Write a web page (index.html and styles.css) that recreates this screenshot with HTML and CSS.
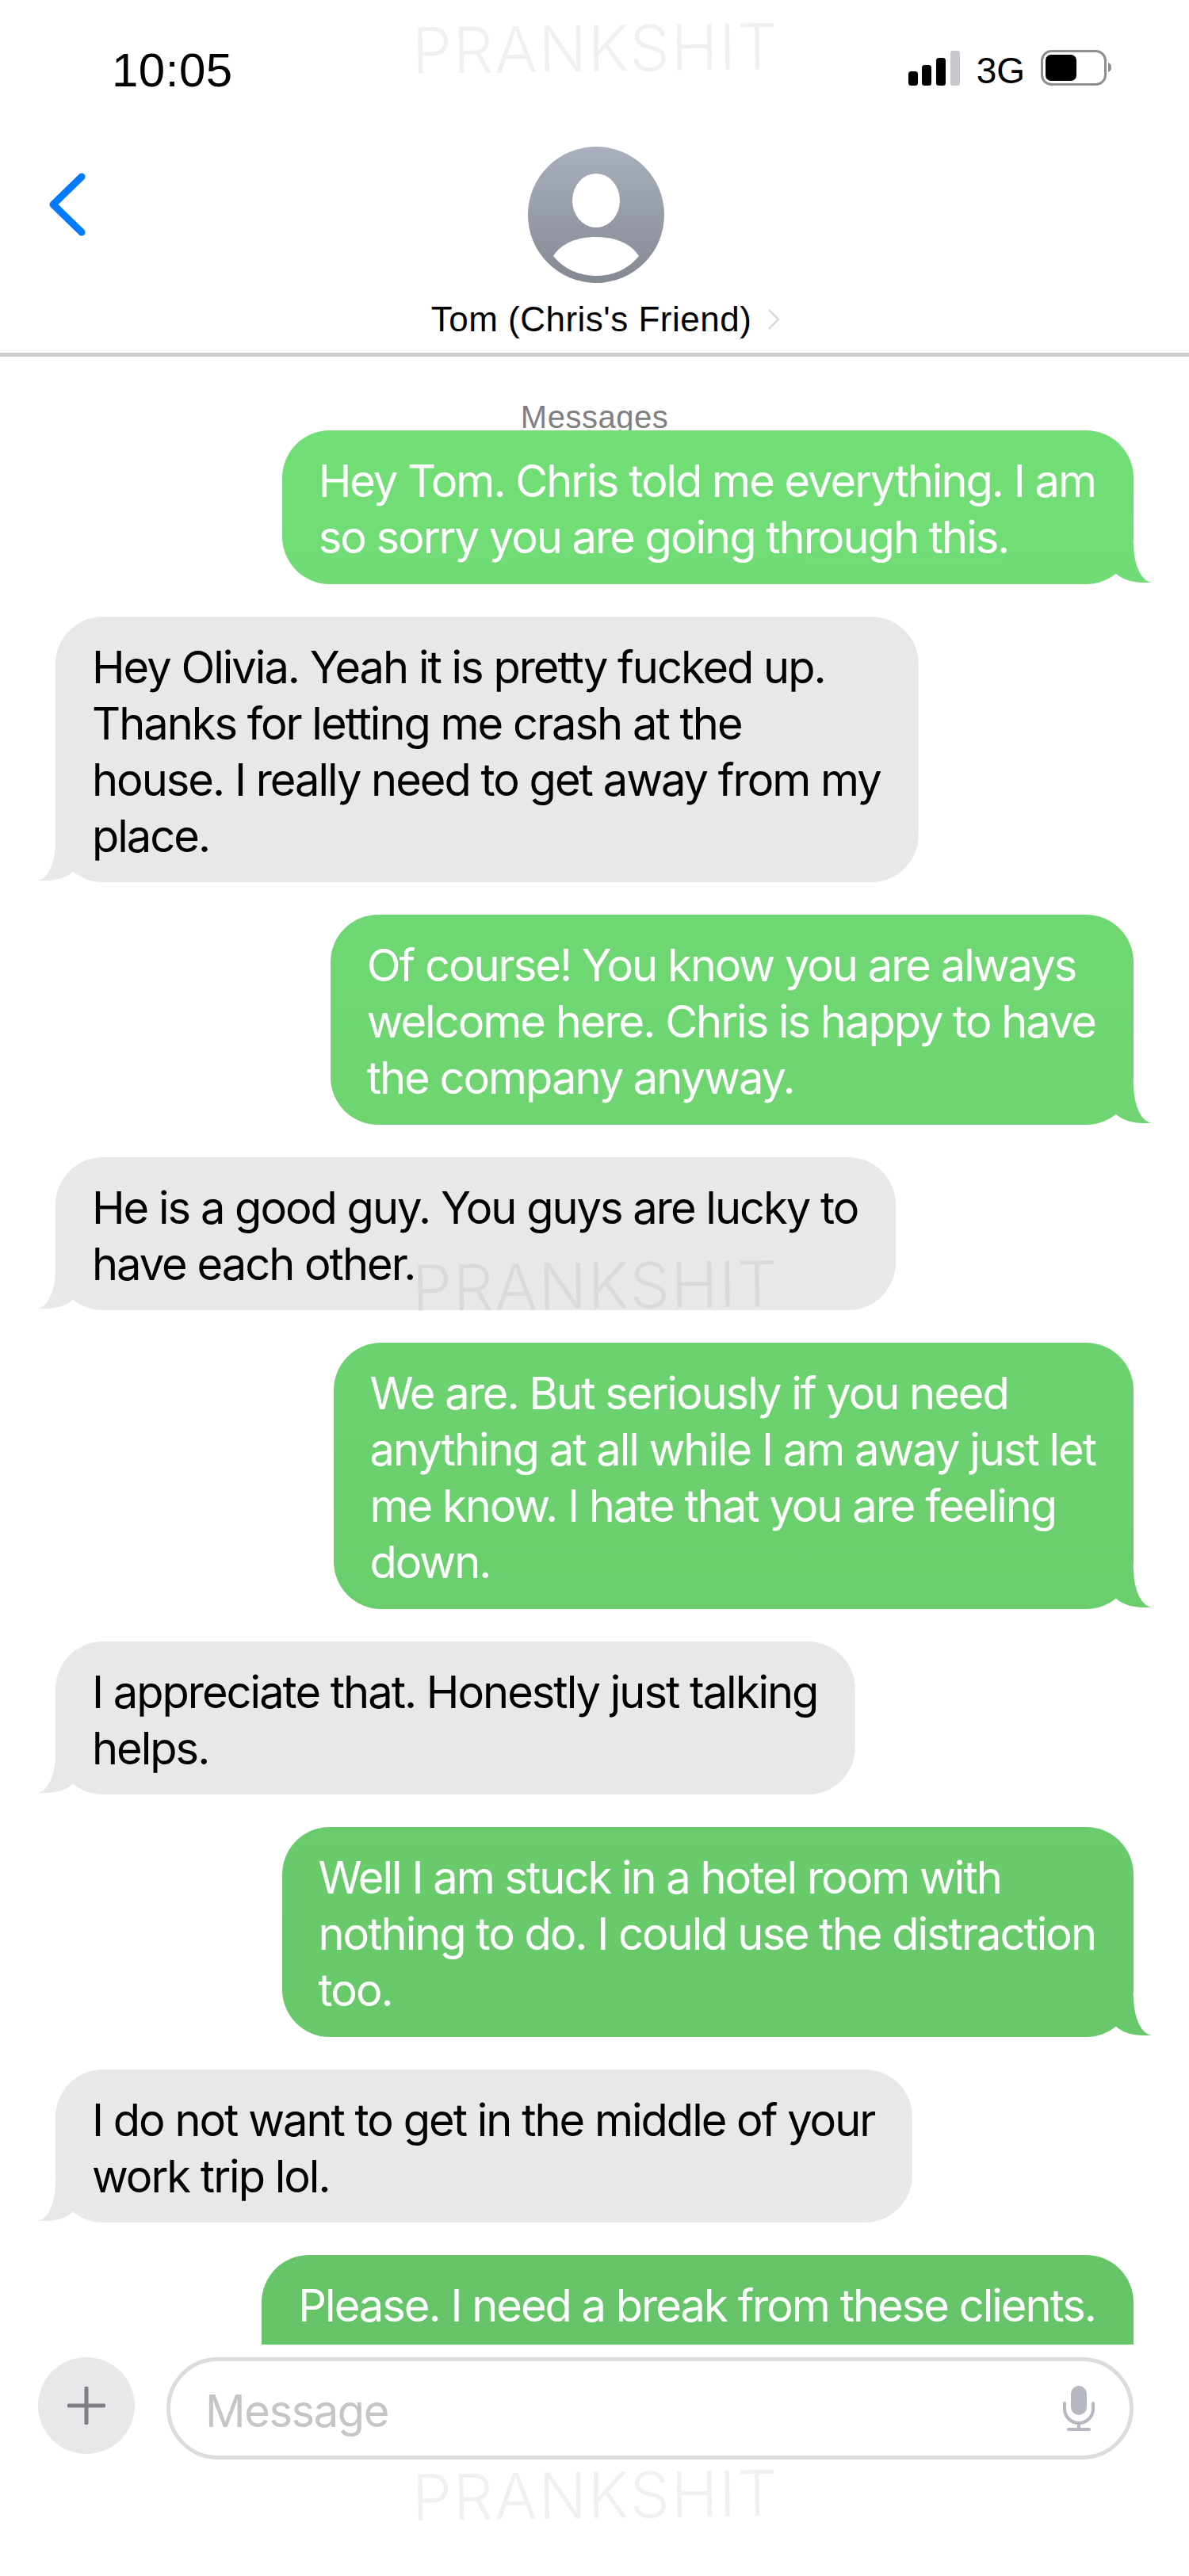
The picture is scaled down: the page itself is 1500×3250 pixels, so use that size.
FILE: index.html
```html
<!DOCTYPE html>
<html lang="en">
<head>
    <meta charset="UTF-8">
    <meta name="viewport" content="width=device-width, initial-scale=1">
    <title>Messages</title>
    <link rel="stylesheet" href="styles.css">
</head>
<body>
<div class="phone">
    <div class="status-bar">
        <div class="time">10:05</div>
        <div class="status-icons">
            <svg class="signal" width="66" height="44" viewBox="0 0 66 44">
                <rect x="0" y="26" width="12" height="18" rx="3.5" fill="#000"/>
                <rect x="17" y="18" width="12" height="26" rx="3.5" fill="#000"/>
                <rect x="35" y="9" width="12" height="35" rx="3.5" fill="#000"/>
                <rect x="53" y="0" width="12" height="44" rx="3" fill="#c7c7cc"/>
            </svg>
            <span class="network">3G</span>
            <svg class="battery" width="90" height="46" viewBox="0 0 90 46">
                <rect x="1.5" y="1.5" width="80" height="42" rx="12" fill="#fff" stroke="#8e8e8e" stroke-width="3"/>
                <rect x="6" y="6" width="39" height="33" rx="7" fill="#000"/>
                <path d="M85 16c3 1 4 3 4 6s-1 5-4 6z" fill="#8e8e8e"/>
            </svg>
        </div>
    </div>

    <div class="header">
        <svg class="back" width="46" height="80" viewBox="0 0 46 80">
            <path d="M41 5L5 40l36 35" fill="none" stroke="#007aff" stroke-width="9" stroke-linecap="round" stroke-linejoin="round"/>
        </svg>
        <div class="contact">
            <svg class="avatar" width="172" height="172" viewBox="0 0 172 172">
                <defs>
                    <linearGradient id="avatar-bg" x1="0" y1="0" x2="0" y2="1">
                        <stop offset="0" stop-color="#a9afbd"/>
                        <stop offset="1" stop-color="#858994"/>
                    </linearGradient>
                </defs>
                <circle cx="86" cy="86" r="86" fill="url(#avatar-bg)"/>
                <ellipse cx="86" cy="68" rx="30" ry="34" fill="#fff"/>
                <path d="M32 138C42 122 62 114 86 114s44 8 54 24c-13 16-32 25-54 25s-41-9-54-25z" fill="#fff"/>
            </svg>
            <div class="contact-name">
                <span>Tom (Chris's Friend)</span>
                <svg class="contact-arrow" width="16" height="28" viewBox="0 0 16 28">
                    <path d="M2 2l12 12L2 26" fill="none" stroke="#d8d8d8" stroke-width="2.5"/>
                </svg>
            </div>
        </div>
    </div>

    <div class="chat">
        <div class="chat-label">Messages</div>

        <div class="bubble me">Hey Tom. Chris told me everything. I am<br>so sorry you are going through this.</div>
        <div class="bubble them">Hey Olivia. Yeah it is pretty fucked up.<br>Thanks for letting me crash at the<br>house. I really need to get away from my<br>place.</div>
        <div class="bubble me">Of course! You know you are always<br>welcome here. Chris is happy to have<br>the company anyway.</div>
        <div class="bubble them">He is a good guy. You guys are lucky to<br>have each other.</div>
        <div class="bubble me">We are. But seriously if you need<br>anything at all while I am away just let<br>me know. I hate that you are feeling<br>down.</div>
        <div class="bubble them">I appreciate that. Honestly just talking<br>helps.</div>
        <div class="bubble me">Well I am stuck in a hotel room with<br>nothing to do. I could use the distraction<br>too.</div>
        <div class="bubble them">I do not want to get in the middle of your<br>work trip lol.</div>
        <div class="bubble me bubble-cut">Please. I need a break from these clients.</div>
    </div>

    <div class="composer">
        <div class="add-button">
            <svg width="48" height="48" viewBox="0 0 48 48">
                <path d="M24 2v44M2 24h44" stroke="#7d7d83" stroke-width="5" stroke-linecap="round"/>
            </svg>
        </div>
        <div class="message-input">
            <span class="placeholder">Message</span>
            <svg class="mic" width="40" height="58" viewBox="0 0 40 58">
                <rect x="10" y="0" width="20" height="37" rx="10" fill="#b5b8c1"/>
                <path d="M2 22v7a18 18 0 0 0 36 0v-7M20 47v8M7 55h26" fill="none" stroke="#b5b8c1" stroke-width="4" stroke-linecap="round"/>
            </svg>
        </div>
    </div>

    <div class="watermark watermark-top">PRANKSHIT</div>
    <div class="watermark watermark-middle">PRANKSHIT</div>
    <div class="watermark watermark-bottom">PRANKSHIT</div>
</div>
</body>
</html>
```

FILE: styles.css
```css
* {
    margin: 0;
    padding: 0;
    box-sizing: border-box;
}

html,
body {
    width: 100%;
    height: 100%;
    background: #ffffff;
}

.phone {
    position: relative;
    display: flex;
    flex-direction: column;
    height: 3250px;
    overflow: hidden;
    font-family: "Liberation Sans", Arial, sans-serif;
}

/* status bar */
.status-bar {
    display: flex;
    justify-content: space-between;
    align-items: flex-start;
    height: 170px;
    padding: 55px 97px 0 141px;
}

.time {
    font-size: 60px;
    line-height: 68px;
    letter-spacing: 0.5px;
}

.status-icons {
    display: flex;
    align-items: flex-start;
    padding-top: 8px;
}

.signal {
    margin-right: 20px;
    margin-top: 1px;
}

.network {
    font-size: 46px;
    line-height: 44px;
    margin-top: 4px;
    margin-right: 20px;
}

/* header */
.header {
    position: relative;
    display: flex;
    justify-content: center;
    height: 280px;
    padding-top: 15px;
    border-bottom: 5px solid #cdcdcd;
}

.back {
    position: absolute;
    left: 62px;
    top: 48px;
}

.contact {
    display: flex;
    flex-direction: column;
    align-items: center;
    margin-left: 5px;
}

.avatar {
    display: block;
}

.contact-name {
    display: flex;
    align-items: center;
    gap: 20px;
    margin-top: 20px;
    margin-left: 23px;
    font-size: 44px;
    line-height: 52px;
    letter-spacing: 0.5px;
}

/* chat */
.chat {
    display: flex;
    flex-direction: column;
    align-items: flex-start;
    flex: 1;
    min-height: 0;
    overflow: hidden;
    padding: 45px 0 0;
    gap: 41px;
}

.chat-label {
    align-self: center;
    height: 48px;
    margin-bottom: -41px;
    font-size: 40px;
    line-height: 62px;
    color: #7f7f84;
    letter-spacing: 0.5px;
}

.bubble {
    position: relative;
    flex-shrink: 0;
    padding: 29px 48px 22.5px 46px;
    border-radius: 60px;
    font-family: Inter, "Liberation Sans", sans-serif;
    font-size: 56px;
    line-height: 71px;
    letter-spacing: -2px;
    white-space: nowrap;
}

.bubble::before,
.bubble::after {
    content: "";
    position: absolute;
    bottom: 2px;
    height: 50px;
}

/* last bubble runs on under the composer */
.bubble-cut {
    padding-bottom: 140px;
}

.me {
    align-self: flex-end;
    margin-right: 70px;
    color: #ffffff;
    background: linear-gradient(#74e077 0, #72de76 543px, #66c468 2958px) fixed;
}

.me::before {
    right: -24px;
    width: 54px;
    background: inherit;
    border-bottom-left-radius: 40px 28px;
}

.me::after {
    right: -30px;
    width: 30px;
    height: 60px;
    background: #ffffff;
    border-bottom-left-radius: 24px 48px;
}

.them {
    margin-left: 70px;
    color: #000000;
    background: #e8e8ea;
}

.them::before {
    left: -24px;
    width: 54px;
    background: inherit;
    border-bottom-right-radius: 40px 28px;
}

.them::after {
    left: -30px;
    width: 30px;
    height: 60px;
    background: #ffffff;
    border-bottom-right-radius: 24px 48px;
}

/* composer */
.composer {
    display: flex;
    align-items: flex-start;
    gap: 40px;
    height: 292px;
    padding: 16px 70px 0 48px;
    background: #ffffff;
}

.add-button {
    display: flex;
    align-items: center;
    justify-content: center;
    width: 122px;
    height: 122px;
    border-radius: 50%;
    background: #e8e8ea;
}

.message-input {
    display: flex;
    align-items: center;
    justify-content: space-between;
    flex: 1;
    height: 129px;
    padding: 0 44px 0 44px;
    border: 5px solid #dcdcdc;
    border-radius: 65px;
}

.placeholder {
    font-family: Inter, "Liberation Sans", sans-serif;
    font-size: 56px;
    letter-spacing: -1.4px;
    color: #c5c5c8;
    padding-top: 6px;
}

/* watermark sits on top of everything */
.watermark {
    position: absolute;
    left: 520px;
    width: 460px;
    font-family: Inter, sans-serif;
    font-weight: 300;
    font-size: 80px;
    line-height: 80px;
    letter-spacing: 1.5px;
    white-space: nowrap;
    color: rgba(0, 0, 0, 0.06);
    transform: rotate(-0.7deg);
    pointer-events: none;
}

.watermark-top {
    top: 21px;
}

.watermark-middle {
    top: 1582px;
}

.watermark-bottom {
    top: 3108px;
}
```
